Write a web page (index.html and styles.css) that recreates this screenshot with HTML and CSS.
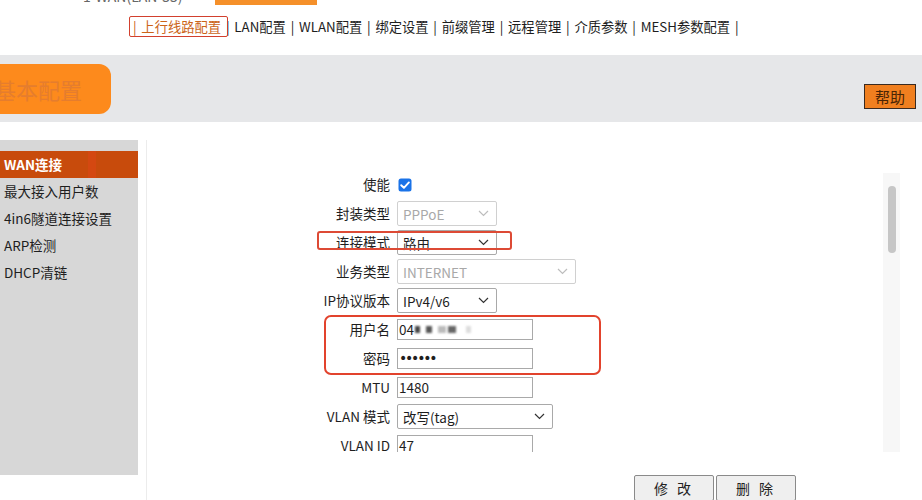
FILE: index.html
```html
<!DOCTYPE html>
<html lang="zh-CN">
<head>
<meta charset="utf-8">
<title>上行线路配置</title>
<link rel="stylesheet" href="styles.css">
</head>
<body>
<div class="topstrip">
  <span class="cut-text">1-WAN(LAN-55)</span>
  <span class="cut-bar"></span>
</div>
<nav class="subnav">
  <span class="nav-active">| 上行线路配置</span> | LAN配置 | WLAN配置 | 绑定设置 | 前缀管理 | 远程管理 | 介质参数 | MESH参数配置 |
  <span class="mark mark-nav"></span>
</nav>
<header class="band">
  <div class="tab">基本配置</div>
  <button class="help">帮助</button>
</header>
<main class="main">
  <aside class="sidebar">
    <div class="side-item active">WAN连接<span class="mark mark-side"></span></div>
    <div class="side-item">最大接入用户数</div>
    <div class="side-item">4in6隧道连接设置</div>
    <div class="side-item">ARP检测</div>
    <div class="side-item">DHCP清链</div>
  </aside>
  <section class="content">
    <div class="scroll-area">
      <div class="form">
        <label class="lbl">使能</label>
        <div class="ctl">
          <svg class="checkbox" width="14" height="14" viewBox="0 0 14 14"><rect x="0.5" y="0.5" width="13" height="13" rx="2.5" fill="#1a73e8"/><path d="M3.2 7.2 L5.9 9.8 L10.9 4.4" fill="none" stroke="#fff" stroke-width="1.9" stroke-linecap="round" stroke-linejoin="round"/></svg>
        </div>
        <label class="lbl">封装类型</label>
        <div class="ctl"><div class="select disabled w100"><span>PPPoE</span><svg class="chev" width="11" height="7" viewBox="0 0 11 7"><path d="M1 1 L5.5 5.5 L10 1" fill="none" stroke-width="1.2"/></svg></div></div>
        <label class="lbl">连接模式</label>
        <div class="ctl"><div class="select w100"><span>路由</span><svg class="chev" width="11" height="7" viewBox="0 0 11 7"><path d="M1 1 L5.5 5.5 L10 1" fill="none" stroke-width="1.2"/></svg></div></div>
        <label class="lbl">业务类型</label>
        <div class="ctl"><div class="select disabled w179"><span>INTERNET</span><svg class="chev" width="11" height="7" viewBox="0 0 11 7"><path d="M1 1 L5.5 5.5 L10 1" fill="none" stroke-width="1.2"/></svg></div></div>
        <label class="lbl">IP协议版本</label>
        <div class="ctl"><div class="select w100"><span>IPv4/v6</span><svg class="chev" width="11" height="7" viewBox="0 0 11 7"><path d="M1 1 L5.5 5.5 L10 1" fill="none" stroke-width="1.2"/></svg></div></div>
        <label class="lbl">用户名</label>
        <div class="ctl"><div class="input"><span>04</span><span class="blur b1"></span><span class="blur b2"></span><span class="blur b3"></span><span class="blur b4"></span><span class="blur b5"></span></div></div>
        <label class="lbl">密码</label>
        <div class="ctl"><div class="input pwd">••••••</div></div>
        <label class="lbl">MTU</label>
        <div class="ctl"><div class="input">1480</div></div>
        <label class="lbl">VLAN 模式</label>
        <div class="ctl"><div class="select w156"><span>改写(tag)</span><svg class="chev" width="11" height="7" viewBox="0 0 11 7"><path d="M1 1 L5.5 5.5 L10 1" fill="none" stroke-width="1.2"/></svg></div></div>
        <label class="lbl">VLAN ID</label>
        <div class="ctl"><div class="input">47</div></div>
        <span class="mark mark-mode"></span>
        <span class="mark mark-cred"></span>
      </div>
      <div class="scrollbar"><div class="thumb"></div></div>
    </div>
    <div class="actions">
      <button class="btn">修 改</button><button class="btn">删 除</button>
    </div>
  </section>
</main>
</body>
</html>
```
FILE: styles.css
```css
html, body {
  margin: 0;
  padding: 0;
  background: #fff;
  width: 922px;
  height: 500px;
  overflow: hidden;
  font-family: "Noto Sans CJK SC", "Noto Sans", sans-serif;
  color: #1e1e1e;
}

.topstrip {
  height: 10px;
  overflow: hidden;
  display: flex;
  align-items: flex-start;
}
.cut-text {
  margin-left: 83px;
  margin-top: -12px;
  font-size: 14px;
  line-height: 16px;
  color: #666;
}
.cut-bar {
  margin-left: 32px;
  width: 102px;
  height: 5px;
  background: #f5902a;
}

.subnav {
  position: relative;
  height: 45px;
  box-sizing: border-box;
  padding: 7px 0 0 133px;
  font-size: 13.3px;
  line-height: 20px;
  word-spacing: 1.8px;
  white-space: nowrap;
  color: #1e1e1e;
}
.nav-active { color: #cc6418; }

.mark {
  position: absolute;
  box-sizing: border-box;
  pointer-events: none;
}
.mark-nav {
  left: 129px;
  top: 6px;
  width: 99px;
  height: 21px;
  border: 1.5px solid #d2402e;
  border-radius: 2px;
}

.band {
  height: 67px;
  background: #e6e7e9;
  display: flex;
  justify-content: space-between;
  align-items: flex-start;
}
.tab {
  margin-top: 9px;
  width: 111px;
  height: 50px;
  box-sizing: border-box;
  background: #fd8a1c;
  border-radius: 0 12px 12px 0;
  font-size: 22px;
  line-height: 50px;
  text-indent: -6px;
  color: #e57d2e;
  overflow: hidden;
  white-space: nowrap;
}
.help {
  margin: 29px 6px 0 0;
  width: 52px;
  height: 25px;
  padding: 0;
  background: #f07f1f;
  border: 1.5px solid #3a2a20;
  border-radius: 0;
  font-family: "Noto Sans CJK SC", sans-serif;
  font-size: 15px;
  line-height: 20px;
  color: #4a2505;
}

.main {
  margin-top: 18px;
  display: flex;
  align-items: flex-start;
}
.sidebar {
  width: 138px;
  height: 335px;
  box-sizing: border-box;
  padding-top: 11px;
  background: #d7d7d7;
  margin-right: 8px;
}
.side-item {
  position: relative;
  height: 27px;
  line-height: 27px;
  padding-left: 4px;
  font-size: 13.5px;
  color: #1e1e1e;
  white-space: nowrap;
}
.side-item.active {
  background: #c84b0c;
  color: #fff;
  font-weight: 600;
}
.mark-side {
  left: 88px;
  top: 0;
  width: 8px;
  height: 27px;
  background: rgba(235, 70, 30, 0.35);
}

.content {
  width: 754px;
  height: 360px;
  box-sizing: border-box;
  border-left: 1px solid #ececec;
}
.scroll-area {
  display: flex;
  height: 312px;
  overflow: hidden;
}
.form {
  position: relative;
  width: 736px;
  box-sizing: border-box;
  padding-top: 30px;
  display: grid;
  grid-template-columns: 243px 1fr;
  grid-auto-rows: 29px;
  column-gap: 7px;
  align-items: center;
  align-content: start;
}
.lbl {
  text-align: right;
  font-size: 13.5px;
  line-height: 15px;
  color: #1e1e1e;
  white-space: nowrap;
}
.ctl {
  display: flex;
  align-items: center;
}
.checkbox { display: block; margin-left: 1px; }

.select {
  height: 25px;
  box-sizing: border-box;
  border: 1px solid #a9a9a9;
  border-radius: 2px;
  display: flex;
  align-items: center;
  justify-content: space-between;
  padding: 0 7px 0 5px;
  font-size: 13.5px;
  color: #1e1e1e;
  background: #fff;
}
.select .chev path { stroke: #333; }
.select.disabled { border-color: #d0d0d0; color: #a8a8a8; }
.select.disabled .chev path { stroke: #bdbdbd; }
.w100 { width: 100px; }
.w179 { width: 179px; }
.w156 { width: 156px; }

.input {
  width: 136px;
  height: 21px;
  box-sizing: border-box;
  border: 1px solid #a9a9a9;
  padding-left: 1px;
  font-size: 13.5px;
  line-height: 19px;
  color: #1e1e1e;
  display: flex;
  align-items: center;
}
.pwd { font-size: 14px; font-family: "DejaVu Sans", sans-serif; letter-spacing: -2.2px; padding-left: 1px; }
.blur {
  display: inline-block;
  height: 7px;
  background: #9a9a9a;
  filter: blur(1px);
}
.b1 { width: 5px; margin-left: 1px; background: #444; }
.b2 { width: 6px; margin-left: 6px; background: #555; }
.b3 { width: 8px; margin-left: 6px; background: #bbb; }
.b4 { width: 8px; margin-left: 2px; background: #666; }
.b5 { width: 5px; margin-left: 10px; background: #ddd; }

.mark-mode {
  left: 170px;
  top: 91px;
  width: 195px;
  height: 19px;
  border: 2px solid #dd4a35;
  border-radius: 3px;
}
.mark-cred {
  left: 177px;
  top: 175px;
  width: 277px;
  height: 60px;
  border: 2.5px solid #e2432d;
  border-radius: 7px;
}

.scrollbar {
  width: 17px;
  height: 279px;
  margin-top: 33px;
  background: #f7f7f7;
  box-sizing: border-box;
  padding: 13px 4px 0 5px;
}
.thumb {
  height: 67px;
  border-radius: 4px;
  background: #c6c6c6;
}

.actions {
  margin-top: 23px;
  padding-left: 487px;
  display: flex;
  gap: 2px;
}
.btn {
  width: 80px;
  height: 26px;
  padding: 0;
  background: #efefef;
  border: 1px solid #8a8a8a;
  border-radius: 2px;
  font-family: "Noto Sans CJK SC", sans-serif;
  font-size: 14px;
  letter-spacing: 3px;
  color: #222;
}
```
